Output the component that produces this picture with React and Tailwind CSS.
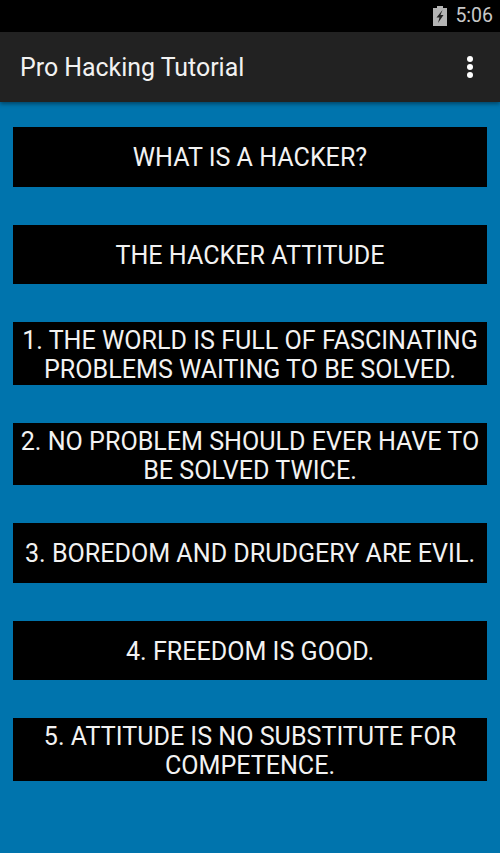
import React from 'react';

const items = [
  { label: 'WHAT IS A HACKER?', h: 'h-[59.33px] pt-[2px]' },
  { label: 'THE HACKER ATTITUDE', h: 'h-[59.33px] pt-[2px]' },
  { label: '1. THE WORLD IS FULL OF FASCINATING PROBLEMS WAITING TO BE SOLVED.', h: 'h-[62.67px] pt-[4px]' },
  { label: '2. NO PROBLEM SHOULD EVER HAVE TO BE SOLVED TWICE.', h: 'h-[62.67px] pt-[4px]' },
  { label: '3. BOREDOM AND DRUDGERY ARE EVIL.', h: 'h-[59.33px] pt-[2px]' },
  { label: '4. FREEDOM IS GOOD.', h: 'h-[59.33px] pt-[2px]' },
  { label: '5. ATTITUDE IS NO SUBSTITUTE FOR COMPETENCE.', h: 'h-[62.67px] pt-[4px]' },
];

const App = () => {
  return (
    <div className="w-[500px] h-[853px] flex flex-col overflow-hidden font-['Roboto',sans-serif] bg-[#0074ad]">
      <div className="h-[32px] bg-black flex items-center justify-end pr-[7px] gap-[8px]">
        <svg width="14" height="20" viewBox="0 0 14 20">
          <path d="M4 0h6v2h4v18H0V2h4z" fill="#b4b4b4" />
          <path d="M9.5 4 3.5 11.5h3L5 17l5.5-8H7.5z" fill="#222" />
        </svg>
        <span className="text-[19.5px] text-[#c8c8c8]">5:06</span>
      </div>
      <div className="h-[70px] bg-[#222222] flex items-center justify-between pl-[20px] pr-[27px] shadow-[0_2px_4px_rgba(0,0,0,0.4)]">
        <span className="text-[#f2f2f2] text-[24.9px] pt-[2px]">Pro Hacking Tutorial</span>
        <div className="flex flex-col gap-[2px]">
          <div className="w-[6px] h-[6px] rounded-full bg-white" />
          <div className="w-[6px] h-[6px] rounded-full bg-white" />
          <div className="w-[6px] h-[6px] rounded-full bg-white" />
        </div>
      </div>
      <div className="flex flex-col gap-[38px] px-[13px] pt-[25.3px]">
        {items.map((item) => (
          <div key={item.label} className={`${item.h} bg-black text-[#f2f2f2] text-[25.1px] leading-[29px] text-center flex items-center justify-center`}>
            {item.label}
          </div>
        ))}
      </div>
    </div>
  );
};

export default App;
